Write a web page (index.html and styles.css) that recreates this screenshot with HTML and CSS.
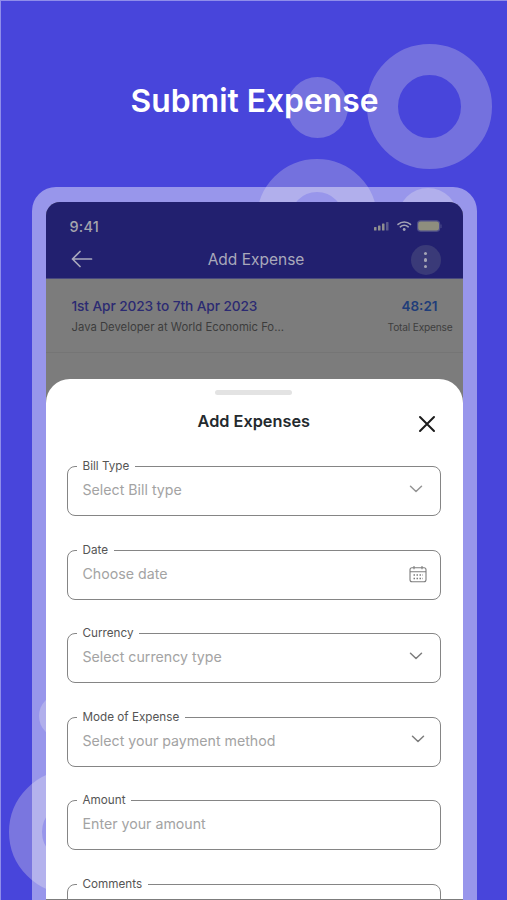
FILE: index.html
```html
<!DOCTYPE html>
<html lang="en">
<head>
<meta charset="utf-8">
<title>Submit Expense</title>
<link rel="stylesheet" href="styles.css">
</head>
<body>
<div class="page">
  <div class="blob ring-top"></div>
  <div class="blob dot-top"></div>
  <div class="blob ring-mid"></div>
  <div class="blob dot-right"></div>
  <div class="blob ring-bottom"></div>
  <div class="blob dot-left"></div>
  <h1 class="title">Submit Expense</h1>
  <div class="frame">
    <div class="screen">
      <div class="appbar">
        <div class="status">
          <span class="time">9:41</span>
          <svg class="status-icons" width="68" height="14" viewBox="0 0 68 14">
            <g fill="#8f8f8f">
              <rect x="0" y="8" width="2.5" height="3.5" rx=".6"/>
              <rect x="4" y="6.5" width="2.5" height="5" rx=".6"/>
              <rect x="8" y="4.5" width="2.5" height="7" rx=".6"/>
            </g>
            <rect x="12" y="3" width="2.5" height="8.5" rx=".6" fill="#5a5a8c"/>
            <g fill="none" stroke="#a2a2b4" stroke-width="1.6" stroke-linecap="round">
              <path d="M24 5.4a9.500 9.500 0 0 1 12.500 0"/>
              <path d="M26.300 7.800a6 6 0 0 1 7.900 0"/>
            </g>
            <circle cx="30.200" cy="10.500" r="1.400" fill="#a2a2b4"/>
            <rect x="43.600" y="1.800" width="22" height="10.400" rx="3" fill="#8e8e7e" stroke="#4c4c8a" stroke-width="1.200"/>
            <rect x="66.500" y="5.500" width="1" height="3.500" fill="#4c4c8a"/>
          </svg>
        </div>
        <div class="navrow">
          <svg class="back" width="22" height="18" viewBox="0 0 22 18" fill="none" stroke="#a9a9bd" stroke-width="1.700" stroke-linecap="round" stroke-linejoin="round">
            <path d="M20.500 9H1.500M9 1.500 1.500 9 9 16.500"/>
          </svg>
          <span class="navtitle">Add Expense</span>
          <span class="more"><i></i><i></i><i></i></span>
        </div>
      </div>
      <div class="summary">
        <div>
          <div class="range">1st Apr 2023 to 7th Apr 2023</div>
          <div class="job">Java Developer at World Economic Fo...</div>
        </div>
        <div class="total">
          <div class="hours">48:21</div>
          <div class="total-label">Total Expense</div>
        </div>
      </div>
      <div class="sheet">
        <div class="grabber"></div>
        <div class="sheet-head">
          <h2 class="sheet-title">Add Expenses</h2>
          <svg class="close" width="18" height="18" viewBox="0 0 18 18" fill="none" stroke="#1c1c1c" stroke-width="2" stroke-linecap="round"><path d="M2 2l14 14M16 2 2 16"/></svg>
        </div>
        <div class="form">
          <div class="field"><label>Bill Type</label><span class="hint">Select Bill type</span>
            <svg class="chev" width="14" height="8" viewBox="0 0 14 8" fill="none" stroke="#959595" stroke-width="1.500" stroke-linecap="round" stroke-linejoin="round"><path d="M1.500 1.200 7 6.500l5.500-5.300"/></svg></div>
          <div class="field"><label>Date</label><span class="hint">Choose date</span>
            <svg class="cal" width="18" height="18" viewBox="0 0 18 18" fill="none" stroke="#7d7d7d" stroke-width="1.100"><rect x="1" y="2.800" width="16" height="14" rx="2"/><path d="M1 6.800h16M5 1v3.200M13 1v3.200"/><path stroke-width="1.300" stroke-dasharray="1.500 1.500" d="M4.500 10h9.500M4.500 13.500h9.500"/></svg></div>
          <div class="field"><label>Currency</label><span class="hint">Select currency type</span>
            <svg class="chev" width="14" height="8" viewBox="0 0 14 8" fill="none" stroke="#7d7d7d" stroke-width="1.500" stroke-linecap="round" stroke-linejoin="round"><path d="M1.500 1.200 7 6.500l5.500-5.300"/></svg></div>
          <div class="field"><label>Mode of Expense</label><span class="hint">Select your payment method</span>
            <svg class="chev chev-far" width="14" height="8" viewBox="0 0 14 8" fill="none" stroke="#7d7d7d" stroke-width="1.500" stroke-linecap="round" stroke-linejoin="round"><path d="M1.500 1.200 7 6.500l5.500-5.300"/></svg></div>
          <div class="field"><label>Amount</label><span class="hint">Enter your amount</span></div>
          <div class="field"><label>Comments</label></div>
        </div>
      </div>
    </div>
  </div>
</div>
</body>
</html>
```

FILE: styles.css
```css
* { box-sizing: border-box; }
html, body { margin: 0; height: 900px; overflow: hidden; }
body { font-family: Inter, "Noto Sans", sans-serif; }
.page {
  position: relative;
  width: 507px;
  height: 900px;
  overflow: hidden;
  background: #4845db;
  border-top: 1.500px solid #8f8dea;
  border-left: 1.500px solid #8f8dea;
  padding-top: 81px;
}
.blob { position: absolute; border-radius: 50%; }
.ring-top { left: 365.500px; top: 42.500px; width: 125px; height: 125px; border: 31px solid #7471de; }
.dot-top { left: 286px; top: 75.500px; width: 61px; height: 61px; background: #7471de; }
.ring-mid { left: 256px; top: 157.500px; width: 120px; height: 120px; border: 33px solid #7471de; }
.dot-right { left: 397px; top: 187px; width: 60px; height: 60px; background: #7471de; }
.ring-bottom { left: 8px; top: 769px; width: 124px; height: 124px; border: 33px solid #7a76df; }
.dot-left { left: 38px; top: 693px; width: 44px; height: 44px; background: #7471de; }
.title {
  position: relative;
  margin: 0;
  padding-left: 1px;
  text-align: center;
  font-size: 31.800px;
  line-height: 37px;
  font-weight: 600;
  color: #fff;
}
.frame {
  position: relative;
  width: 445px;
  height: 720px;
  margin: 68px 0 0 30.500px;
  padding: 15px 14px 0;
  border-radius: 24px 24px 0 0;
  background: rgba(255, 255, 255, .44);
}
.screen {
  display: flex;
  flex-direction: column;
  height: 100%;
  border-radius: 14px 14px 0 0;
  overflow: hidden;
  background: #7c7c7c;
}
.appbar {
  flex: none;
  height: 77px;
  padding: 15px 12px 0 24px;
  background: #22206f;
  border-bottom: 1px solid #4a4a7e;
}
.status { display: flex; justify-content: space-between; align-items: center; height: 20px; }
.time { font-size: 14.500px; line-height: 20px; font-weight: 500; color: #a5a5ad; letter-spacing: .2px; }
.status-icons { margin-right: 9px; margin-top: -3px; }
.navrow {
  display: flex;
  align-items: center;
  justify-content: space-between;
  height: 32px;
  margin-top: 7px;
  padding-right: 10px;
}
.back { margin-left: 1px; margin-top: -2px; }
.navtitle { font-size: 15.500px; line-height: 20px; font-weight: 400; color: #a9a9bb; margin-left: 9px; }
.more {
  display: flex;
  flex-direction: column;
  align-items: center;
  justify-content: center;
  gap: 3px;
  width: 30px;
  height: 30px;
  border-radius: 50%;
  background: #3a3a78;
}
.more i { width: 3.500px; height: 3.500px; border-radius: 50%; background: #a5a5b5; }
.summary {
  flex: none;
  display: flex;
  justify-content: space-between;
  height: 74px;
  padding: 17px 10px 0 26px;
  border-bottom: 1px solid #757575;
}
.range { font-size: 13.700px; line-height: 20px; font-weight: 500; color: #2b2a72; letter-spacing: -.1px; }
.job { font-size: 11.300px; line-height: 16px; margin-top: 3px; color: #3c3c3c; }
.total { text-align: right; }
.hours { font-size: 13.500px; line-height: 20px; font-weight: 600; color: #1f3d79; padding-right: 15px; }
.total-label { font-size: 10.200px; line-height: 16px; margin-top: 3px; color: #3e3e3e; letter-spacing: -.2px; }
.sheet {
  flex: none;
  height: 520px;
  margin-top: 26px;
  padding: 11px 22px 0 21.500px;
  border-radius: 24px 24px 0 0;
  background: #fff;
}
.grabber { width: 77px; height: 5px; margin: 0 auto; border-radius: 3px; background: #e3e3e3; }
.sheet-head { position: relative; height: 71px; padding-top: 16px; }
.sheet-title { margin: 0; text-align: center; font-size: 16.300px; line-height: 20px; font-weight: 600; color: #242a2e; }
.close { position: absolute; right: 5px; top: 20px; }
.form { display: flex; flex-direction: column; gap: 33.500px; }
.field {
  position: relative;
  display: flex;
  align-items: center;
  justify-content: space-between;
  flex: none;
  height: 50px;
  padding: 0 17px 2px 14.500px;
  border: 1.500px solid #858585;
  border-radius: 8px;
}
.field label {
  position: absolute;
  left: 8.500px;
  top: -9px;
  padding: 0 6px;
  background: #fff;
  font-size: 11.700px;
  line-height: 16px;
  color: #555;
}
.hint { font-size: 14.200px; line-height: 20px; color: #a3a3a3; }
.chev { margin-top: -3px; }
.chev-far { margin-right: -2px; }
.cal { margin-right: -4.500px; margin-top: 1px; }
```
